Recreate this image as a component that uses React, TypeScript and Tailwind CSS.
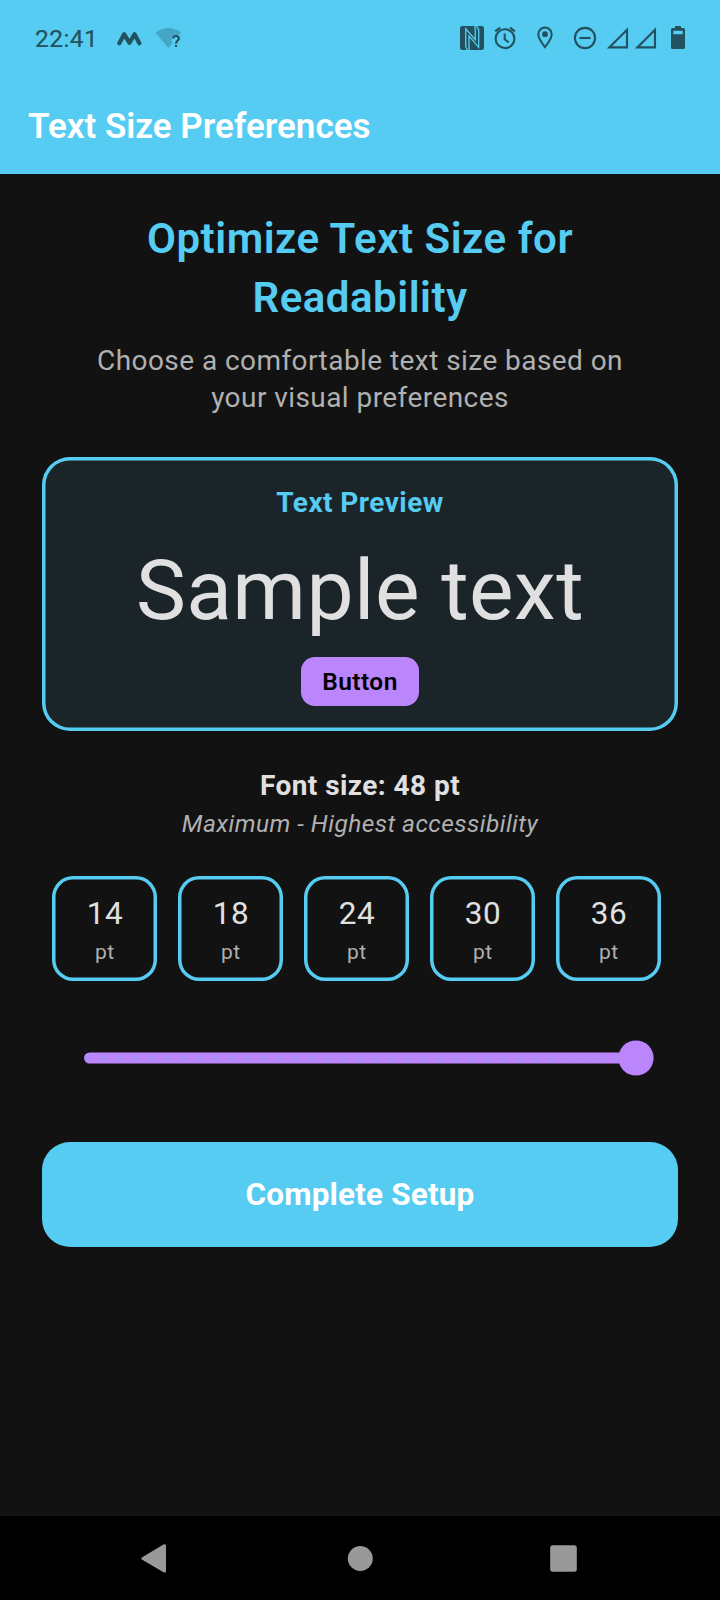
const sizes = [14, 18, 24, 30, 36];
const ticks = Array.from({ length: 34 }, (_, i) => i);

function StatusBar() {
  return (
    <div className="flex h-[77px] shrink-0 items-start text-[#22525f]">
      <span className="ml-[35px] mt-[24px] w-[64px] text-[24.5px] leading-[30px] tracking-[0.4375px] [-webkit-text-stroke:0.2px_currentColor]">22:41</span>
      <svg className="h-[77px] w-[621px]" viewBox="99 0 621 77" fill="none">
        <path d="M119.3 43.2 124.2 34.3 129.5 42.8 134.5 34.3 139.4 43.2" stroke="currentColor" strokeWidth="4.2" strokeLinecap="round" strokeLinejoin="round" />
        <path d="M155.5 32.5Q168.500 23.500 181.200 32.500L178 35.500Q172.500 36 171.500 40.500L172.500 43.500 168.300 48Z" fill="#45a5c5" />
        <path d="M173.300 38.400Q173.500 36 176 36 178.900 36 178.900 38.500C178.900 40.500 176 40.800 176 43.800M176 45.100V47" stroke="currentColor" strokeWidth="2.200" />
        <rect x="460" y="26" width="24" height="24" rx="2.500" fill="currentColor" />
        <path d="M468 50Q465.700 48.500 465.700 45.500V28.800L475.300 39.800V31Q475.300 28 474.800 26" stroke="#56ccf2" strokeWidth="1.300" />
        <path d="M476 26Q478.700 27.500 478.700 31V47.300L469 36V45Q469 48 469.400 50" stroke="#56ccf2" strokeWidth="1.300" />
        <circle cx="505" cy="38.700" r="9.400" stroke="currentColor" strokeWidth="2.100" />
        <path d="M504.700 33.500V39.300L508.700 42.500M495.200 31.400 500.200 27.600M515 31.400 510 27.600" stroke="currentColor" strokeWidth="2.100" />
        <path d="M545 47.200C540.500 41.500 538.300 37.700 538.300 34.300A6.700 6.700 0 0 1 551.700 34.300C551.700 37.700 549.500 41.500 545 47.200Z" stroke="currentColor" strokeWidth="2" />
        <circle cx="545" cy="34.200" r="2.900" fill="currentColor" />
        <circle cx="585" cy="38" r="10.100" stroke="currentColor" strokeWidth="2.100" />
        <path d="M579.500 38H590.500" stroke="currentColor" strokeWidth="2.100" />
        <path d="M609.300 47.400H627V29.700ZM637.300 47.400H655V29.700Z" stroke="currentColor" strokeWidth="2.100" />
        <path fillRule="evenodd" d="M675 26H681V28H683.500Q685 28 685 29.500V47.500Q685 49 683.500 49H672.500Q671 49 671 47.500V29.500Q671 28 672.500 28H675ZM673.300 30.700V34.300H682.700V30.700Z" fill="currentColor" />
      </svg>
    </div>
  );
}

function SizeOption({ size }: { size: number }) {
  return (
    <button className="flex h-[105px] w-[105px] flex-col items-center rounded-[21px] pt-[20px] shadow-[inset_0_0_0_3.5px_#56ccf2]">
      <span className="text-[31.5px] leading-[36px] tracking-[0.4375px] text-[#e0e0e0]">{size}</span>
      <span className="mt-[10px] text-[21px] leading-[20px] tracking-[0.4375px] text-[#b0b0b0]">pt</span>
    </button>
  );
}

export default function App() {
  return (
    <div className="flex h-[1600px] w-[720px] flex-col overflow-hidden bg-[#121212] font-['Roboto',sans-serif]">
      <header className="flex h-[174px] shrink-0 flex-col bg-[#56ccf2]">
        <StatusBar />
        <h1 className="ml-[28px] mt-[29px] text-[35px] font-semibold leading-[42px] text-white">Text Size Preferences</h1>
      </header>

      <main className="flex flex-1 flex-col items-center px-[42px] pt-[35px] text-center">
        <h2 className="text-[42px] font-semibold leading-[59px] tracking-[0.525px] text-[#56ccf2]">
          Optimize Text Size for<br />Readability
        </h2>
        <p className="mt-[15px] text-[28px] leading-[37px] tracking-[0.4375px] text-[#b0b0b0]">
          Choose a comfortable text size based on<br />your visual preferences
        </p>

        <section className="mt-[41px] flex h-[273.5px] w-full flex-col items-center rounded-[28px] bg-[#1b2529] pt-[28px] shadow-[inset_0_0_0_3.5px_#56ccf2]">
          <h3 className="text-[28px] font-bold leading-[36px] tracking-[0.4375px] text-[#56ccf2]">Text Preview</h3>
          <p className="mt-[21px] text-[84px] leading-[98px] tracking-[0.4375px] text-[#e0e0e0]">Sample text</p>
          <button className="mt-[17px] flex h-[49px] w-[118px] items-center justify-center rounded-[14px] bg-[#bb86fc] text-[24.5px] font-semibold leading-[30px] tracking-[0.4375px] text-black">Button</button>
        </section>

        <p className="mt-[36.5px] text-[28px] font-bold leading-[37px] tracking-[0.4375px] text-[#e0e0e0]">Font size: 48 pt</p>
        <p className="mt-[4px] text-[24.5px] italic leading-[32px] tracking-[0.4375px] text-[#b0b0b0]">Maximum - Highest accessibility</p>

        <div className="mt-[36px] flex gap-[21px] self-start pl-[10.4px]">
          {sizes.map((s) => <SizeOption key={s} size={s} />)}
        </div>

        <svg className="mt-[59px] mr-[22px] h-[36px] w-[572px] shrink-0 self-end" viewBox="84 1040 572 36">
          <rect x="84" y="1052.500" width="552" height="11" rx="5.500" fill="#bb86fc" />
          {ticks.map((i) => <circle key={i} cx={87.800 + i * 16.020} cy="1058" r="1.700" fill="#a295f8" />)}
          <circle cx="636" cy="1058" r="17.600" fill="#bb86fc" />
        </svg>

        <button className="mt-[65.5px] flex h-[105px] w-full shrink-0 items-center justify-center rounded-[28px] bg-[#56ccf2] pt-[1px] text-[31.5px] font-bold leading-[38px] tracking-[0.15px] text-white">Complete Setup</button>
      </main>

      <nav className="h-[84px] shrink-0 bg-black">
        <svg className="h-[84px] w-[720px]" viewBox="0 1516 720 84" fill="#999999">
          <path d="M141.800 1557.500 163.500 1544.600Q166 1543.500 166 1546V1571Q166 1573.400 163.500 1572.300L141.800 1559.500Q140.600 1558.500 141.800 1557.500Z" />
          <circle cx="360.300" cy="1558.500" r="12.500" />
          <rect x="550.200" y="1545.200" width="26.600" height="26.600" rx="2.500" />
        </svg>
      </nav>
    </div>
  );
}
